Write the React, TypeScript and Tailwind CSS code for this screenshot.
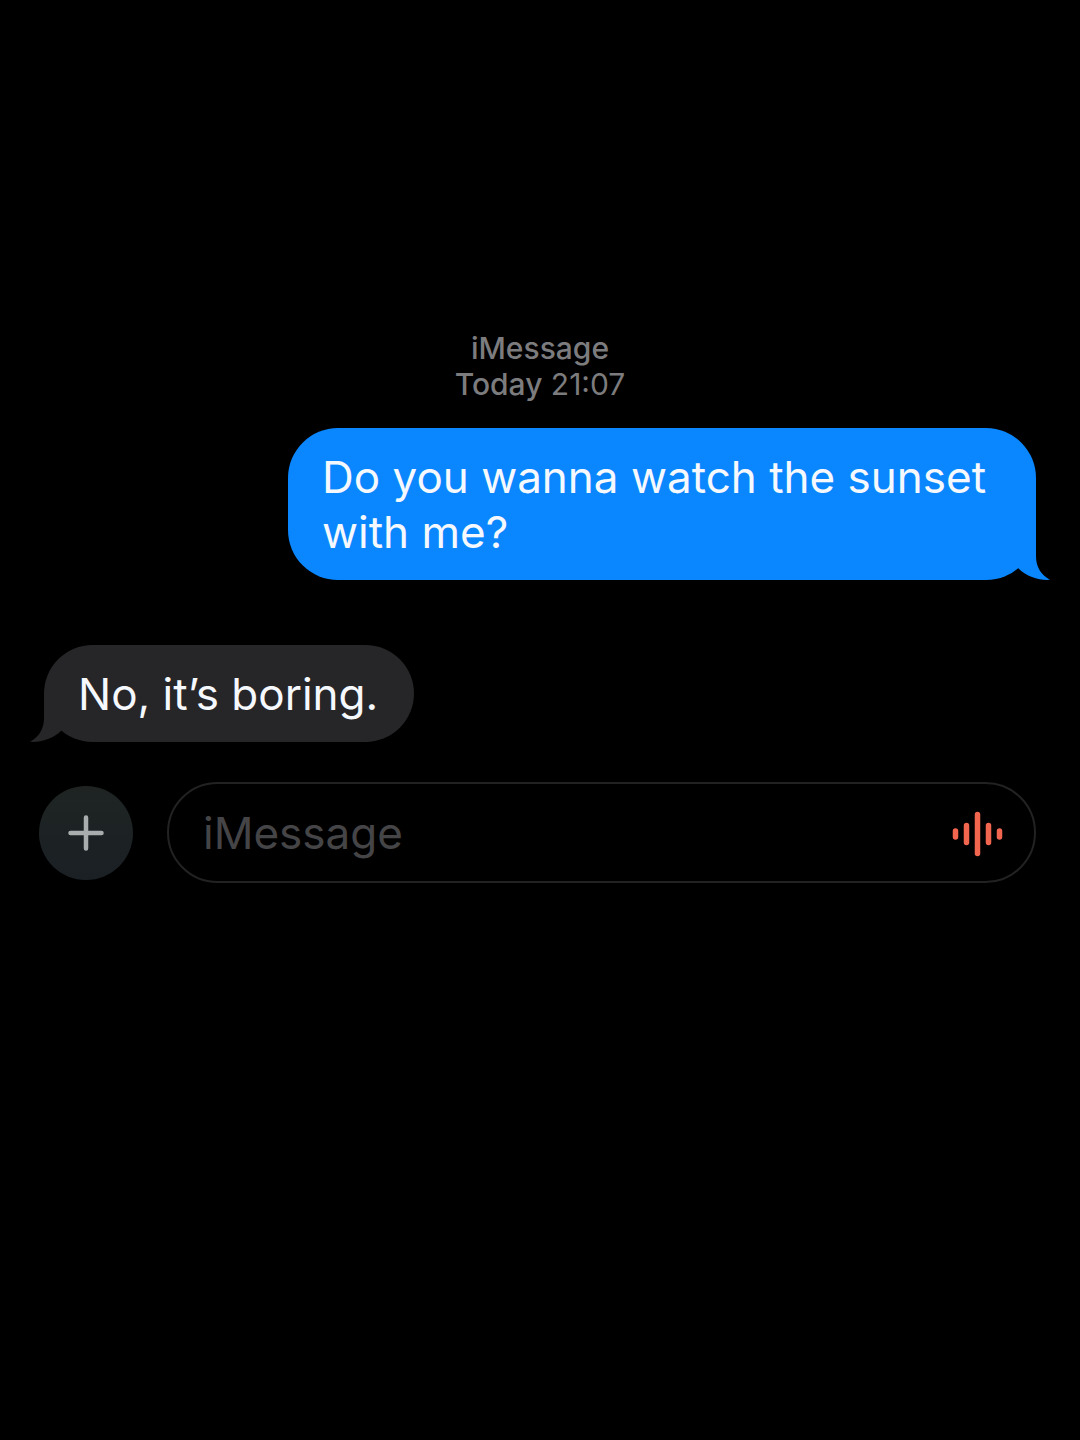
import React from "react";

type Message = {
	id: number;
	text: string;
	sent: boolean;
};

const messages: Message[] = [
	{ id: 1, text: "Do you wanna watch the sunset with me?", sent: true },
	{ id: 2, text: "No, it’s boring.", sent: false },
];

const BubbleTail = ({ className }: { className: string }) => (
	<svg
		aria-hidden="true"
		viewBox="0 0 50 50"
		className={`absolute bottom-0 h-[50px] w-[50px] ${className}`}
	>
		<path
			d="M36 0V26C36 37 41 45 50 49.800C39 50.500 27 47 18.500 38.500L8 24V0Z"
			fill="currentColor"
		/>
	</svg>
);

const Bubble = ({ message }: { message: Message }) => (
	<li className={message.sent ? "flex justify-end" : "flex justify-start"}>
		<div
			className={`relative max-w-[748px] rounded-[50px] pt-[22px] pr-9 pb-5 pl-[34px] text-[44px] leading-[55px] ${
				message.sent ? "bg-[#0a87ff]" : "bg-[#262629]"
			}`}
		>
			<BubbleTail
				className={
					message.sent
						? "-right-[14px] text-[#0a87ff]"
						: "-left-[14px] -scale-x-100 text-[#262629]"
				}
			/>
			<p className="relative text-[#f5f8fc]">{message.text}</p>
		</div>
	</li>
);

const PlusIcon = () => (
	<svg aria-hidden="true" viewBox="0 0 36 36" className="h-9 w-9">
		<path
			d="M18 2.500V33.500M2.500 18H33.500"
			stroke="#a9adad"
			strokeWidth="4.500"
			strokeLinecap="round"
		/>
	</svg>
);

const WaveformIcon = () => (
	<svg aria-hidden="true" viewBox="0 0 52 46" className="h-[46px] w-[52px]">
		<path
			d="M4.500 20V26M15.500 14.500V31.500M26.500 3.500V42.500M37.500 14.500V31.500M48.500 20V26"
			stroke="#f2664f"
			strokeWidth="5.500"
			strokeLinecap="round"
		/>
	</svg>
);

export default function App() {
	const [draft, setDraft] = React.useState("");

	return (
		<main className="min-h-screen bg-black pt-[330px] font-['Inter',sans-serif]">
			{/* Conversation */}
			<header className="text-center text-[30px] leading-9 text-[#7c7c7e]">
				<h1 className="font-medium">iMessage</h1>
				<p>
					<span className="font-medium">Today</span> 21:07
				</p>
			</header>
			<ul className="mt-[26px] flex flex-col gap-[65px] px-11">
				{messages.map((message) => (
					<Bubble key={message.id} message={message} />
				))}
			</ul>

			{/* Composer */}
			<form
				className="mt-10 flex items-center gap-[34px] pr-11 pl-[39px]"
				onSubmit={(e) => e.preventDefault()}
			>
				<button
					type="button"
					aria-label="Add attachment"
					className="flex h-[94px] w-[94px] shrink-0 items-center justify-center rounded-full bg-linear-to-b from-[#1f2423] to-[#1a2024]"
				>
					<PlusIcon />
				</button>
				<div className="flex min-w-0 flex-1 items-center rounded-full border-2 border-[#222223] pt-[22px] pr-[31px] pb-5 pl-[34px]">
					<input
						type="text"
						aria-label="iMessage"
						placeholder="iMessage"
						value={draft}
						onChange={(e) => setDraft(e.target.value)}
						className="h-[55px] min-w-0 flex-1 bg-transparent text-[44px] leading-[55px] text-[#f5f8fc] outline-none placeholder:text-[#454547]"
					/>
					<button type="button" aria-label="Record audio">
						<WaveformIcon />
					</button>
				</div>
			</form>
		</main>
	);
}
